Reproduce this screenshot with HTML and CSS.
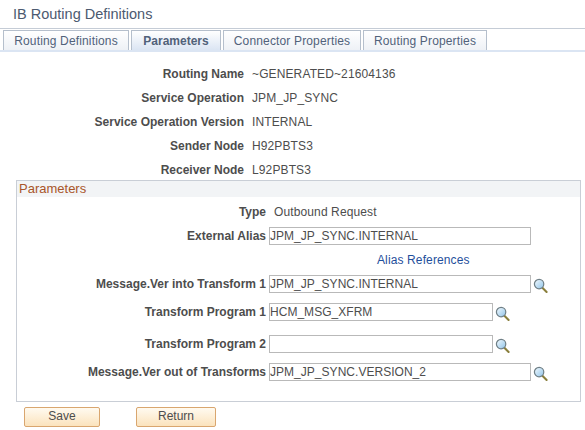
FILE: index.html
```html
<!DOCTYPE html>
<html lang="en">
<head>
<meta charset="UTF-8">
<title>IB Routing Definitions</title>
<link rel="stylesheet" href="styles.css">
</head>
<body>
<svg class="defs" width="0" height="0">
  <defs>
    <linearGradient id="glass" x1="0" y1="0" x2="1" y2="1">
      <stop offset="0" stop-color="#f4fbff"/>
      <stop offset="1" stop-color="#8fc3e8"/>
    </linearGradient>
    <symbol id="lookup" viewBox="0 0 16 16">
      <path d="M10 10.5 L14.5 15" stroke="#8a7f3c" stroke-width="2.2" stroke-linecap="round"/>
      <circle cx="6.5" cy="6.5" r="5" fill="url(#glass)" stroke="#6f7f86" stroke-width="1.3"/>
    </symbol>
  </defs>
</svg>

<div class="page-title">IB Routing Definitions</div>

<div class="tabs">
  <div class="tab tab-routing">Routing Definitions</div>
  <div class="tab tab-active">Parameters</div>
  <div class="tab tab-connector">Connector Properties</div>
  <div class="tab tab-props">Routing Properties</div>
</div>

<div class="summary">
  <div class="label">Routing Name</div><div class="value">~GENERATED~21604136</div>
  <div class="label">Service Operation</div><div class="value">JPM_JP_SYNC</div>
  <div class="label">Service Operation Version</div><div class="value">INTERNAL</div>
  <div class="label">Sender Node</div><div class="value">H92PBTS3</div>
  <div class="label">Receiver Node</div><div class="value">L92PBTS3</div>
</div>

<div class="panel">
  <div class="panel-head">Parameters</div>
  <div class="fields">
    <div class="label">Type</div>
    <div class="value">Outbound Request</div>

    <div class="label">External Alias</div>
    <div class="field"><input class="input input-long" value="JPM_JP_SYNC.INTERNAL"></div>

    <div></div>
    <div class="link-row"><a class="link">Alias References</a></div>

    <div class="label">Message.Ver into Transform 1</div>
    <div class="field"><input class="input input-long" value="JPM_JP_SYNC.INTERNAL"><svg class="lookup"><use href="#lookup"/></svg></div>

    <div class="label">Transform Program 1</div>
    <div class="field"><input class="input input-short" value="HCM_MSG_XFRM"><svg class="lookup"><use href="#lookup"/></svg></div>

    <div class="label">Transform Program 2</div>
    <div class="field"><input class="input input-short" value=""><svg class="lookup"><use href="#lookup"/></svg></div>

    <div class="label">Message.Ver out of Transforms</div>
    <div class="field"><input class="input input-long" value="JPM_JP_SYNC.VERSION_2"><svg class="lookup"><use href="#lookup"/></svg></div>
  </div>
</div>

<div class="buttons">
  <button class="btn btn-save">Save</button>
  <button class="btn btn-return">Return</button>
</div>
</body>
</html>
```

FILE: styles.css
```css
* {
  box-sizing: border-box;
}

body {
  margin: 0;
  background: #fff;
  font-family: "Liberation Sans", Arial, sans-serif;
  font-size: 12px;
  color: #4d4d4d;
}

.defs {
  display: block;
}

.page-title {
  height: 29px;
  padding: 6px 0 0 13px;
  font-size: 14.5px;
  line-height: 16px;
  color: #4c5a70;
  border-bottom: 1px solid #c5ccd6;
}

.tabs {
  display: flex;
  gap: 2px;
  height: 23px;
  padding: 1px 0 0 3px;
  border-bottom: 2px solid #dbe5f3;
}

.tab {
  height: 20px;
  border: 1px solid #b5bfcc;
  border-bottom: none;
  background: linear-gradient(#fff, #eef1f6);
  color: #51627a;
  line-height: 20px;
  letter-spacing: 0.15px;
  text-align: center;
}

.tab-routing {
  width: 126px;
}

.tab-active {
  width: 90px;
  font-weight: bold;
  letter-spacing: 0;
  background: linear-gradient(#fff, #dbe5f3);
}

.tab-connector {
  width: 138px;
}

.tab-props {
  width: 124px;
}

.summary {
  display: grid;
  grid-template-columns: 244px 1fr;
  grid-auto-rows: 24px;
  column-gap: 8px;
  padding-top: 10px;
  line-height: 24px;
}

.label {
  font-weight: bold;
  text-align: right;
  white-space: nowrap;
}

.value {
  letter-spacing: 0.12px;
  white-space: nowrap;
}

.panel {
  height: 222px;
  margin: -2px 4px 0 16px;
  border: 1px solid #c9ced6;
}

.panel-head {
  height: 16px;
  padding-left: 2px;
  background: #f2f4f6;
  color: #a9562a;
  font-size: 13px;
  line-height: 15px;
}

.fields {
  display: grid;
  grid-template-columns: 249px 1fr;
  grid-template-rows: 24px 24px 24px 28px 32px 28px 28px;
  column-gap: 3px;
  padding-top: 3px;
  line-height: 24px;
}

.fields > .value {
  padding-left: 5px;
}

.field {
  display: flex;
  align-items: center;
  gap: 2px;
  height: 24px;
}

.input {
  height: 18px;
  padding: 0;
  border: 1px solid #b9b9b9;
  background: #fff;
  font: 12px "Liberation Sans", Arial, sans-serif;
  letter-spacing: 0.03px;
  color: #4d4d4d;
  outline: none;
}

.input-long {
  width: 262px;
}

.input-short {
  width: 224px;
}

.lookup {
  width: 15px;
  height: 15px;
  margin-top: 2px;
}

.link-row {
  padding-left: 108px;
}

.link {
  letter-spacing: 0.12px;
  color: #1f4f9c;
}

.buttons {
  display: flex;
  gap: 36px;
  padding: 5px 0 0 24px;
}

.btn {
  height: 20px;
  padding: 0 0 2px;
  border: 1px solid #d9a66f;
  border-radius: 2px;
  background: linear-gradient(#fffaf0, #fbe3bd);
  font: 12px "Liberation Sans", Arial, sans-serif;
  color: #4d4d4d;
}

.btn-save {
  width: 76px;
}

.btn-return {
  width: 80px;
}
```
